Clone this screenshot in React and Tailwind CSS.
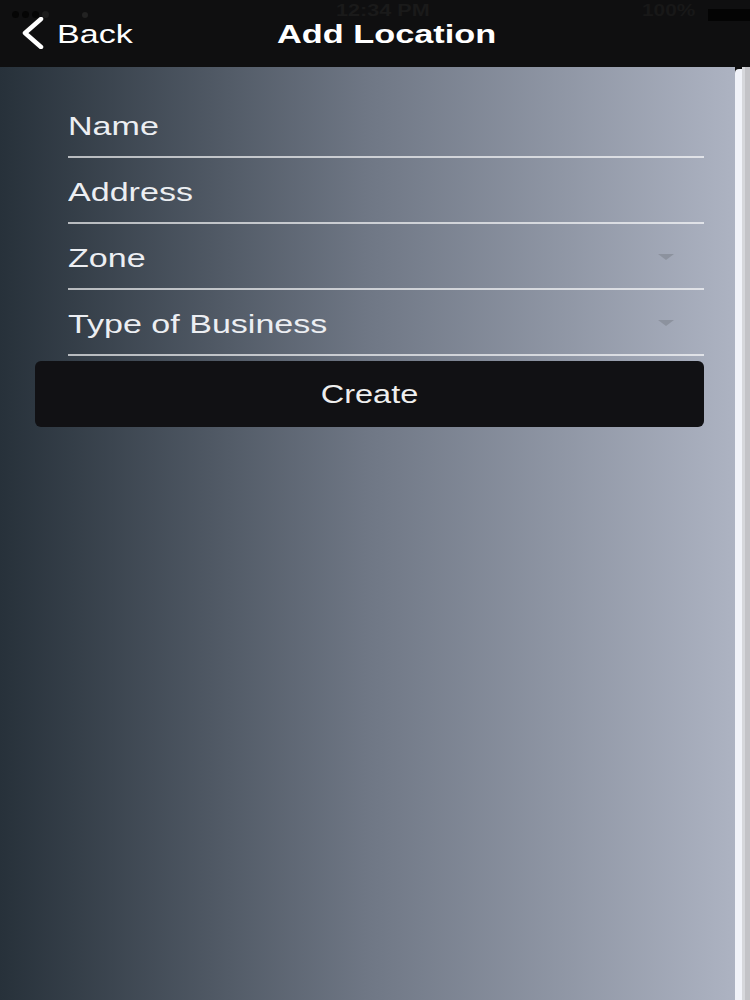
import React from "react";

function Field({ label, dropdown }) {
  return (
    <div className="relative flex h-[66px] items-center border-b-2 border-white/65 pt-[4px]">
      <span className="inline-block origin-left scale-x-[1.31] text-[26px] leading-none text-[#eceef2]">
        {label}
      </span>
      {dropdown && (
        <svg className="absolute right-[30px] top-[30px]" width="16" height="6" viewBox="0 0 16 6">
          <path d="M0 0 L16 0 L8 6 Z" fill="#8c929e" />
        </svg>
      )}
    </div>
  );
}

export default function App() {
  return (
    <div
      className="flex h-[1000px] w-[750px] flex-col overflow-hidden bg-[#0f0f10]"
      style={{ fontFamily: '"Liberation Sans", Arial, sans-serif' }}
    >
      {/* Header */}
      <div className="relative h-[67px] shrink-0 bg-[#0f0f10]">
        {/* status bar (faint) */}
        <div className="absolute left-[12px] top-[11px] flex items-center gap-[3px]">
          <span className="h-[7px] w-[7px] rounded-full bg-[#050505]" />
          <span className="h-[7px] w-[7px] rounded-full bg-[#050505]" />
          <span className="h-[7px] w-[7px] rounded-full bg-[#050505]" />
          <span className="h-[7px] w-[7px] rounded-full bg-[#1c1c1c]" />
          <span className="ml-[30px] h-[6px] w-[6px] rounded-full bg-[#222]" />
        </div>
        <div className="absolute left-[336px] top-[3px] text-[16px] font-bold leading-none text-[#1a1a1a]">
          <span className="inline-block origin-left scale-x-[1.35]">12:34 PM</span>
        </div>
        <div className="absolute left-[642px] top-[3px] text-[16px] font-bold leading-none text-[#181818]">
          <span className="inline-block origin-left scale-x-[1.3]">100%</span>
        </div>
        <div className="absolute left-[708px] top-[9px] h-[12px] w-[42px] bg-[#040404]" />

        {/* nav */}
        <div className="absolute left-[19px] top-[17px] flex items-center">
          <svg width="26" height="32" viewBox="0 0 26 32">
            <path d="M22 2 L6 16 L22 30" fill="none" stroke="#ffffff" strokeWidth="4.5" strokeLinecap="round" strokeLinejoin="round" />
          </svg>
        </div>
        <div className="absolute left-[57px] top-[21px] text-[26px] leading-none text-white">
          <span className="inline-block origin-left scale-x-[1.31]">Back</span>
        </div>
        <div className="absolute left-[277px] top-[21px] text-[26px] font-bold leading-none text-white">
          <span className="inline-block origin-left scale-x-[1.32]">Add Location</span>
        </div>
      </div>

      {/* Body */}
      <div className="flex flex-1">
        <div className="flex w-[735px] flex-col bg-gradient-to-r from-[#27313a] via-[#6f7785] to-[#adb3c2]">
          <div className="ml-[68px] mr-[31px] mt-[25px] flex flex-col">
            <Field label="Name" />
            <Field label="Address" />
            <Field label="Zone" dropdown />
            <Field label="Type of Business" dropdown />
          </div>
          <button className="ml-[35px] mt-[5px] flex h-[66px] w-[669px] items-center justify-center rounded-[6px] bg-[#111114] pt-[2px] text-[25px] text-[#eeeeee]">
            <span className="inline-block scale-x-[1.3]">Create</span>
          </button>
        </div>
        <div className="mt-[2px] w-[7px] rounded-tl-[4px] bg-[#f1f3f9]" />
        <div className="w-[3px] bg-[#d6d7db]" />
        <div className="flex-1 bg-[#c3c3c7]" />
      </div>
    </div>
  );
}
